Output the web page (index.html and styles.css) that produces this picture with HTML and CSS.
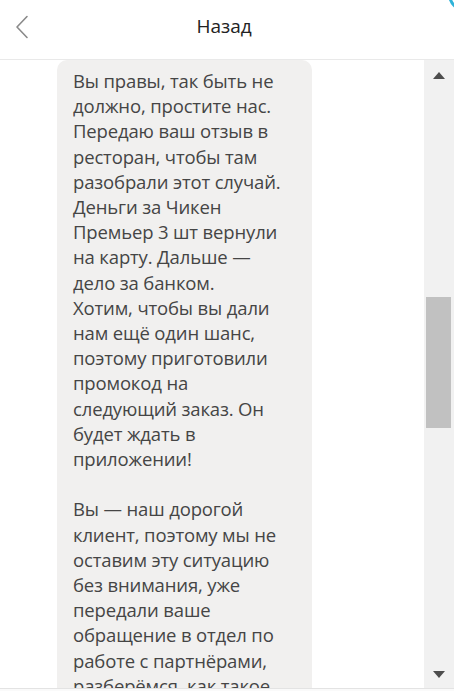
FILE: index.html
```html
<!DOCTYPE html>
<html lang="ru">
<head>
<meta charset="utf-8">
<link rel="stylesheet" href="styles.css">
</head>
<body>
<div class="app">
  <header class="header">
    <button class="back" aria-label="Назад">
      <svg width="14" height="24" viewBox="0 0 14 24"><path d="M12 1.5 L2 12 L12 22.5" fill="none" stroke="#8a8a8a" stroke-width="1.6" stroke-linecap="round" stroke-linejoin="round"/></svg>
    </button>
    <div class="title">Назад</div>
    <span class="fab-edge"></span>
  </header>
  <div class="body">
    <div class="chat">
      <div class="bubble">
        <p>Вы правы, так быть не<br>должно, простите нас.<br>Передаю ваш отзыв в<br>ресторан, чтобы там<br>разобрали этот случай.<br>Деньги за Чикен<br>Премьер 3 шт вернули<br>на карту. Дальше —<br>дело за банком.<br>Хотим, чтобы вы дали<br>нам ещё один шанс,<br>поэтому приготовили<br>промокод на<br>следующий заказ. Он<br>будет ждать в<br>приложении!</p>
        <p>Вы — наш дорогой<br>клиент, поэтому мы не<br>оставим эту ситуацию<br>без внимания, уже<br>передали ваше<br>обращение в отдел по<br>работе с партнёрами,<br>разберёмся, как такое</p>
      </div>
    </div>
    <div class="scrollbar">
      <span class="arrow up"></span>
      <div class="track"><span class="thumb"></span></div>
      <span class="arrow down"></span>
    </div>
  </div>
  <div class="footer"></div>
</div>
</body>
</html>
```
FILE: styles.css
```css
* { box-sizing: border-box; }
html, body { margin: 0; padding: 0; background: #fff; }
body { font-family: "Open Sans", "Noto Sans", sans-serif; overflow: hidden; }
.app { width: 454px; height: 691px; display: flex; flex-direction: column; position: relative; overflow: hidden; }
.header { height: 60px; flex: none; display: flex; align-items: center; justify-content: center; border-bottom: 1px solid #e9e9e9; position: relative; }
.back { position: absolute; left: 14px; top: 14px; width: 16px; height: 26px; padding: 0; border: 0; background: none; display: flex; align-items: center; justify-content: center; }
.title { font-size: 19px; color: #222; letter-spacing: 0; margin-top: -8px; margin-left: -6px; }
.fab-edge { position: absolute; right: -30px; top: -24px; width: 36px; height: 36px; border-radius: 50%; border: 3px solid #2fb3d9; }
.body { flex: 1; display: flex; min-height: 0; }
.chat { flex: 1; overflow: hidden; padding-left: 57px; }
.bubble { width: 255px; background: #f1f0ef; border-radius: 10px 10px 0 0; padding: 8px 8px 0 16px; color: #454545; font-size: 18.5px; line-height: 25.2px; letter-spacing: -0.15px; }
.bubble p { margin: 0 0 25.2px; white-space: nowrap; }
.scrollbar { width: 30px; flex: none; background: #f1f1f1; display: flex; flex-direction: column; align-items: center; padding: 12px 0 10px 0; }
.arrow { width: 0; height: 0; border-left: 6px solid transparent; border-right: 6px solid transparent; flex: none; }
.arrow.up { border-bottom: 7px solid #4d4d4d; }
.arrow.down { border-top: 7px solid #4d4d4d; }
.track { flex: 1; width: 100%; position: relative; }
.thumb { position: absolute; left: 2px; right: 3px; top: 218px; height: 131px; background: #c1c1c1; }
.footer { height: 3px; flex: none; border-top: 1px solid #e3e3e3; background: #fafafa; }
```
